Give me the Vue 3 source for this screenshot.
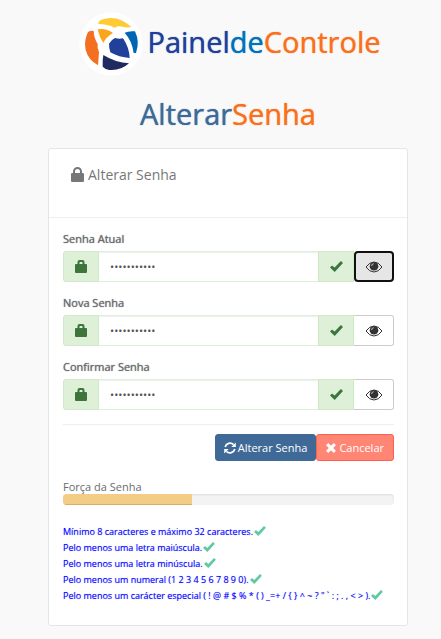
<script setup>
import {ref} from 'vue';

const fields = ref([
  {id: 'current', label: 'Senha Atual', value: 'Abcdef#1234', visible: false, active: true},
  {id: 'new', label: 'Nova Senha', value: 'Abcdef#1234', visible: false, active: false},
  {id: 'confirm', label: 'Confirmar Senha', value: 'Abcdef#1234', visible: false, active: false},
]);

const strength = ref(39);

const rules = [
  'Mínimo 8 caracteres e máximo 32 caracteres.',
  'Pelo menos uma letra maiúscula.',
  'Pelo menos uma letra minúscula.',
  'Pelo menos um numeral (1 2 3 4 5 6 7 8 9 0).',
  'Pelo menos um carácter especial ( ! @ # $ % * ( ) _=+ / { } ^ ~ ? " ` : ; . , < > ).',
];

const toggle = (field) => {
  fields.value.forEach((item) => {
    item.active = item.id === field.id;
  });
  field.visible = !field.visible;
};
</script>

<template>
  <main class="page">
    <header class="brand">
      <svg class="logo" viewBox="30 36 192 192" aria-hidden="true">
        <circle cx="126" cy="132" r="95" fill="#fff"/>
        <path d="M88 72Q88 63 97 59Q145 42 187 81Q173 84 160 80Q148 77 137 83Q115 72 88 72Z" fill="#ffcb33"/>
        <path d="M86 88Q110 83 132 99Q111 111 103 129Q91 112 86 88Z" fill="#fba51c"/>
        <path d="M167 98Q180 92 198 94Q213 126 201 159H194Q190 124 167 98Z" fill="#0066b3"/>
        <path d="M57 96Q66 91 74 93Q75 115 86 132Q84 145 90 156L87 196Q58 180 50 150Q44 122 57 96Z" fill="#f36f21"/>
        <path d="M120 131Q127 119 138 114Q150 118 162 115Q181 143 182 174Q150 172 124 157Q120 145 120 131Z" fill="#21409a"/>
        <path d="M103 165Q140 188 180 190Q155 213 121 210Q107 207 101 200Q100 180 103 165Z" fill="#1f2a60"/>
      </svg>
      <div class="brand-name"><span class="royal">Painel</span><span class="blue">de</span><span class="orange">Controle</span></div>
    </header>

    <h1><span class="steel">Alterar</span><span class="orange">Senha</span></h1>

    <section class="card">
      <div class="card-header">
        <svg class="lock" viewBox="0 0 13 15" aria-hidden="true">
          <path d="M1 6H2V4.500A4.500 4.500 0 0 1 11 4.500V6H12Q13 6 13 7V14Q13 15 12 15H1Q0 15 0 14V7Q0 6 1 6ZM4 6H9V4.500A2.500 2.500 0 0 0 4 4.500Z" fill="currentColor"/>
        </svg>
        <h2>Alterar Senha</h2>
      </div>

      <form class="card-body" @submit.prevent>
        <div v-for="field in fields" :key="field.id" class="field">
          <label :for="field.id">{{ field.label }}</label>
          <div class="input-group">
            <span class="addon addon-left">
              <svg class="bag" viewBox="0 0 12 13" aria-hidden="true">
                <path d="M1 4H2.500V2Q2.500 0 4.500 0H7.500Q9.500 0 9.500 2V4H11Q12 4 12 5V12Q12 13 11 13H1Q0 13 0 12V5Q0 4 1 4ZM4.500 4H7.500V2.500Q7.500 2 7 2H5Q4.500 2 4.500 2.500Z" fill="currentColor"/>
              </svg>
            </span>
            <input :id="field.id" v-model="field.value" :type="field.visible ? 'text' : 'password'" autocomplete="off"/>
            <span class="addon">
              <svg class="tick" viewBox="0 0 13 11" aria-hidden="true">
                <path d="M0 6.500L2 4.400L4.600 6.600L10.900 0L13 2L4.700 11Z" fill="currentColor"/>
              </svg>
            </span>
            <button type="button" class="eye-button" :class="{active: field.active}" aria-label="Mostrar senha" @click="toggle(field)">
              <svg class="eye" viewBox="0 0 18 12" aria-hidden="true">
                <path d="M1 6Q4.500 1 9 1T17 6Q13.500 11 9 11T1 6Z" fill="none" stroke="currentColor" stroke-width="1"/>
                <circle cx="9" cy="5.300" r="4.300" fill="currentColor"/>
                <path d="M6.600 5Q6.700 2.900 8.700 2.700" fill="none" stroke="#fff" stroke-width=".7"/>
              </svg>
            </button>
          </div>
        </div>

        <div class="actions">
          <button type="submit" class="btn btn-primary">
            <svg class="refresh" viewBox="0 0 12 12" aria-hidden="true">
              <path d="M1.200 5A5 5 0 0 1 9.600 2.600M10.800 7A5 5 0 0 1 2.400 9.400" fill="none" stroke="currentColor" stroke-width="1.700"/>
              <path d="M11.800 .5V5H7.300ZM.2 11.500V7H4.700Z" fill="currentColor"/>
            </svg>
            Alterar Senha
          </button>
          <button type="button" class="btn btn-danger">
            <svg class="cross" viewBox="0 0 10 10" aria-hidden="true">
              <path d="M2.200 0L5 2.800L7.800 0L10 2.200L7.200 5L10 7.800L7.800 10L5 7.200L2.200 10L0 7.800L2.800 5L0 2.200Z" fill="currentColor"/>
            </svg>
            Cancelar
          </button>
        </div>

        <div class="strength">
          <span id="strength-label">Força da Senha</span>
          <div class="progress" role="progressbar" aria-labelledby="strength-label" :aria-valuenow="strength">
            <div class="progress-bar" :style="{width: strength + '%'}"></div>
          </div>
        </div>

        <ul class="rules">
          <li v-for="rule in rules" :key="rule">
            {{ rule }}
            <svg class="rule-tick" viewBox="0 0 13 11" aria-hidden="true">
              <path d="M0 6.500L2 4.400L4.600 6.600L10.900 0L13 2L4.700 11Z" fill="currentColor"/>
            </svg>
          </li>
        </ul>
      </form>
    </section>
  </main>
</template>

<style>
body {
  background: #f9f9f9;
}
</style>

<style scoped>
* {
  box-sizing: border-box;
}

.page {
  padding: 12px 33px 12px 48px;
  font-family: "Open Sans", sans-serif;
  font-size: 11px;
  color: #6a6c6f;
}

.brand {
  display: flex;
  align-items: center;
  justify-content: center;
  gap: 4px;
  padding-left: 4px;
}

.logo {
  width: 64px;
  height: 64px;
}

.brand-name {
  padding-bottom: 4px;
}

.brand-name, h1 {
  font-size: 29px;
  line-height: 40px;
  font-weight: 400;
}

.royal {
  color: #21409a;
}

.blue {
  color: #0072bc;
}

.orange {
  color: #f97021;
}

.steel {
  color: #3f6a97;
}

.royal, .blue, .orange, .steel {
  text-shadow: 0 0 1px currentColor;
}

h1 {
  margin: 18px 0 14px;
  text-align: center;
}

.card {
  background: #fff;
  border: 1px solid #e4e5e7;
  border-radius: 3px;
}

.card-header {
  display: flex;
  align-items: flex-start;
  gap: 4px;
  min-height: 69px;
  padding: 16px 22px;
  border-bottom: 1px solid #eee;
  color: #777;
}

.lock {
  width: 13px;
  height: 15px;
  margin-top: 2px;
}

h2 {
  margin: 0;
  font-size: 14px;
  line-height: 20px;
  font-weight: 400;
}

.card-body {
  padding: 13px 13px 22px 14px;
}

.field {
  margin-bottom: 13px;
}

label {
  display: block;
  line-height: 16px;
  margin-bottom: 4px;
  text-shadow: 0 0 1px currentColor;
}

.input-group {
  display: flex;
  height: 31px;
}

.addon {
  display: flex;
  align-items: center;
  justify-content: center;
  width: 36px;
  border: 1px solid #d0e9c6;
  background: #dff0d8;
  color: #3c763d;
}

.addon-left {
  border-radius: 3px 0 0 3px;
}

.bag {
  width: 12px;
  height: 13px;
}

.tick {
  width: 13px;
  height: 11px;
}

input {
  flex: 1;
  min-width: 0;
  padding: 0 11px;
  border: 1px solid #dff0d8;
  border-width: 1px 0;
  box-shadow: inset 0 1px 1px #eee;
  outline: none;
  font-family: inherit;
  font-size: 11px;
  color: #555;
}

.eye-button {
  display: flex;
  align-items: center;
  justify-content: center;
  width: 40px;
  padding: 0;
  border: 1px solid #ccc;
  border-left: 0;
  border-radius: 0 3px 3px 0;
  background: #fff;
  color: #333;
}

.eye-button.active {
  border: 2px solid #101010;
  border-radius: 4px;
  background: #e6e6e6;
}

.eye {
  width: 18px;
  height: 12px;
}

.actions {
  display: flex;
  justify-content: flex-end;
  margin-top: 14px;
  padding-top: 9px;
  border-top: 1px solid #eee;
}

.btn {
  display: flex;
  align-items: center;
  gap: 2px;
  height: 27px;
  padding: 0 8px;
  border: 1px solid #3f6a97;
  border-radius: 3px;
  font-family: inherit;
  font-size: 11px;
  color: #fff;
}

.btn-primary {
  background: #3f6a97;
}

.btn-danger {
  gap: 3px;
  padding: 0 9px;
  border-color: #ff604a;
  background: #ff8575;
}

.refresh {
  width: 12px;
  height: 12px;
}

.cross {
  width: 10px;
  height: 10px;
}

.strength {
  padding-top: 18px;
  line-height: 16px;
}

#strength-label {
  display: block;
  height: 15px;
}

.progress {
  height: 11px;
  overflow: hidden;
  border-radius: 4px;
  background: #f3f3f3;
  box-shadow: inset 0 1px 2px #ddd;
}

.progress-bar {
  height: 100%;
  background: #f3cd85;
  box-shadow: inset 0 -1px 0 #d5b06a;
}

.rules {
  list-style: none;
  margin: 18px 0 0;
  padding: 0;
  font-size: 9px;
  color: #00f;
  text-shadow: 0 0 1px #99f;
}

.rules li {
  display: flex;
  align-items: center;
  gap: 1px;
  height: 16px;
  white-space: nowrap;
}

.rule-tick {
  width: 12px;
  height: 10px;
  color: #5fc9a0;
}
</style>
